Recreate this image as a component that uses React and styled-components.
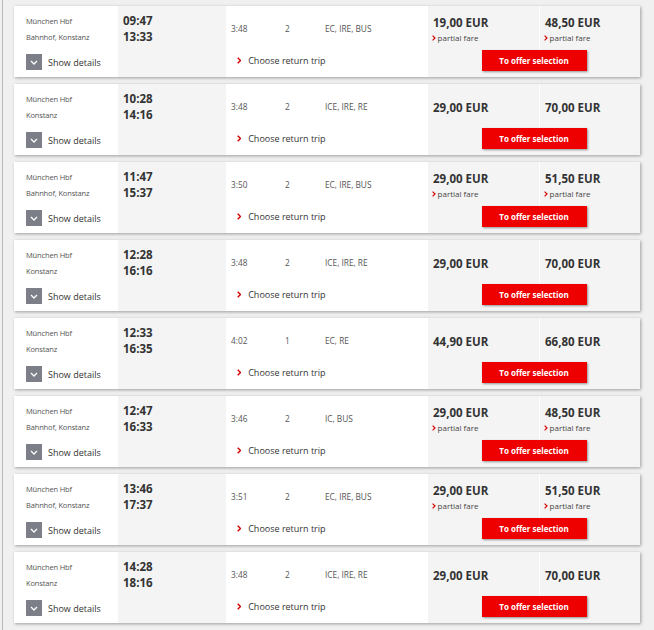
import React from "react";
import styled, { createGlobalStyle } from "styled-components";

const trips = [
  { from: "München Hbf", to: "Bahnhof, Konstanz", dep: "09:47", arr: "13:33", dur: "3:48", changes: "2", products: "EC, IRE, BUS", p1: "19,00 EUR", p2: "48,50 EUR", partial: true },
  { from: "München Hbf", to: "Konstanz", dep: "10:28", arr: "14:16", dur: "3:48", changes: "2", products: "ICE, IRE, RE", p1: "29,00 EUR", p2: "70,00 EUR", partial: false },
  { from: "München Hbf", to: "Bahnhof, Konstanz", dep: "11:47", arr: "15:37", dur: "3:50", changes: "2", products: "EC, IRE, BUS", p1: "29,00 EUR", p2: "51,50 EUR", partial: true },
  { from: "München Hbf", to: "Konstanz", dep: "12:28", arr: "16:16", dur: "3:48", changes: "2", products: "ICE, IRE, RE", p1: "29,00 EUR", p2: "70,00 EUR", partial: false },
  { from: "München Hbf", to: "Konstanz", dep: "12:33", arr: "16:35", dur: "4:02", changes: "1", products: "EC, RE", p1: "44,90 EUR", p2: "66,80 EUR", partial: false },
  { from: "München Hbf", to: "Bahnhof, Konstanz", dep: "12:47", arr: "16:33", dur: "3:46", changes: "2", products: "IC, BUS", p1: "29,00 EUR", p2: "48,50 EUR", partial: true },
  { from: "München Hbf", to: "Bahnhof, Konstanz", dep: "13:46", arr: "17:37", dur: "3:51", changes: "2", products: "EC, IRE, BUS", p1: "29,00 EUR", p2: "51,50 EUR", partial: true },
  { from: "München Hbf", to: "Konstanz", dep: "14:28", arr: "18:16", dur: "3:48", changes: "2", products: "ICE, IRE, RE", p1: "29,00 EUR", p2: "70,00 EUR", partial: false },
];

const GlobalStyle = createGlobalStyle`
  html, body {
    margin: 0;
    padding: 0;
    background: #f0f0f0;
    font-family: "Open Sans", "Noto Sans", Arial, sans-serif;
    color: #333;
  }
`;

const RedChevron = ({ size = 7 }) => (
  <svg width={size * 0.6} height={size} viewBox="0 0 6 10">
    <polyline points="1,1 5,5 1,9" fill="none" stroke="#d40000" strokeWidth="2" />
  </svg>
);

const DownChevron = () => (
  <svg width="8" height="5" viewBox="0 0 8 5">
    <polyline points="1,1 4,4 7,1" fill="none" stroke="#fff" strokeWidth="1.3" />
  </svg>
);

export default function App() {
  return (
    <>
      <GlobalStyle />
      <Page>
        {trips.map((t, i) => (
          <Card key={i}>
            <Stations>
              <Station>{t.from}</Station>
              <Station>{t.to}</Station>
              <Details>
                <DetailsBox>
                  <DownChevron />
                </DetailsBox>
                Show details
              </Details>
            </Stations>
            <Times>
              <Time>{t.dep}</Time>
              <Time>{t.arr}</Time>
            </Times>
            <Info>
              <InfoRow>
                <InfoCell width="54px">{t.dur}</InfoCell>
                <InfoCell width="40px">{t.changes}</InfoCell>
                <InfoCell>{t.products}</InfoCell>
              </InfoRow>
              <ReturnLink>
                <RedChevron />
                <span>Choose return trip</span>
              </ReturnLink>
            </Info>
            <Prices>
              <PriceRow>
                {[t.p1, t.p2].map((p, j) => (
                  <PriceCell key={j} divider={j === 1}>
                    <Price>{p}</Price>
                    {t.partial && (
                      <Partial>
                        <RedChevron size={6} />
                        partial fare
                      </Partial>
                    )}
                  </PriceCell>
                ))}
              </PriceRow>
              <OfferButton>To offer selection</OfferButton>
            </Prices>
          </Card>
        ))}
      </Page>
    </>
  );
}

const Page = styled.div`
  margin-left: 2px;
  border-left: 1px solid #b8b8b8;
  padding: 6px 0 0 11px;
  display: flex;
  flex-direction: column;
  gap: 7px;
  min-height: 630px;
  box-sizing: border-box;
  overflow: hidden;
`;

const Card = styled.div`
  width: 626px;
  height: 71px;
  display: grid;
  grid-template-columns: 104px 108px 202px 212px;
  background: #fff;
  box-shadow: 1px 1px 3px rgba(0, 0, 0, 0.35);
  flex-shrink: 0;
`;

const Stations = styled.div`
  padding: 7px 0 0 12px;
  display: flex;
  flex-direction: column;
`;

const Station = styled.div`
  font-size: 7.5px;
  line-height: 16px;
  color: #555;
  letter-spacing: -0.15px;
  white-space: nowrap;
`;

const Details = styled.div`
  margin-top: 9px;
  display: flex;
  align-items: center;
  gap: 6px;
  font-size: 9px;
  color: #333;
`;

const DetailsBox = styled.div`
  width: 16px;
  height: 16px;
  background: #7c7e88;
  display: flex;
  align-items: center;
  justify-content: center;
`;

const Times = styled.div`
  background: #f4f4f4;
  padding: 7px 0 0 5px;
`;

const Time = styled.div`
  font-size: 11.5px;
  font-weight: 700;
  line-height: 16px;
  color: #333;
`;

const Info = styled.div`
  padding: 16px 0 0 5px;
  display: flex;
  flex-direction: column;
`;

const InfoRow = styled.div`
  display: flex;
  font-size: 8.3px;
  line-height: 14px;
  color: #555;
`;

const InfoCell = styled.div`
  width: ${(p) => p.width || "auto"};
  white-space: nowrap;
`;

const ReturnLink = styled.div`
  margin-top: 18px;
  padding-left: 6px;
  display: flex;
  align-items: center;
  gap: 7px;
  font-size: 9px;
  color: #333;
`;

const Prices = styled.div`
  background: #f4f4f4;
  display: flex;
  flex-direction: column;
  align-items: center;
`;

const PriceRow = styled.div`
  align-self: stretch;
  height: 48px;
  margin-bottom: -4px;
  display: grid;
  grid-template-columns: 111px 1fr;
`;

const PriceCell = styled.div`
  padding-left: 5px;
  display: flex;
  flex-direction: column;
  justify-content: center;
  border-left: ${(p) => (p.divider ? "1px solid #fff" : "none")};
`;

const Price = styled.div`
  font-size: 11.5px;
  font-weight: 700;
  line-height: 16px;
  color: #333;
`;

const Partial = styled.div`
  display: flex;
  align-items: center;
  gap: 2px;
  margin-left: -1px;
  font-size: 8px;
  line-height: 14px;
  color: #444;
`;

const OfferButton = styled.div`
  position: relative;
  width: 105px;
  height: 21px;
  background: #ee0000;
  color: #fff;
  font-size: 8px;
  font-weight: 700;
  display: flex;
  align-items: center;
  justify-content: center;
  box-shadow: 1px 1px 2px rgba(0, 0, 0, 0.4);
`;
